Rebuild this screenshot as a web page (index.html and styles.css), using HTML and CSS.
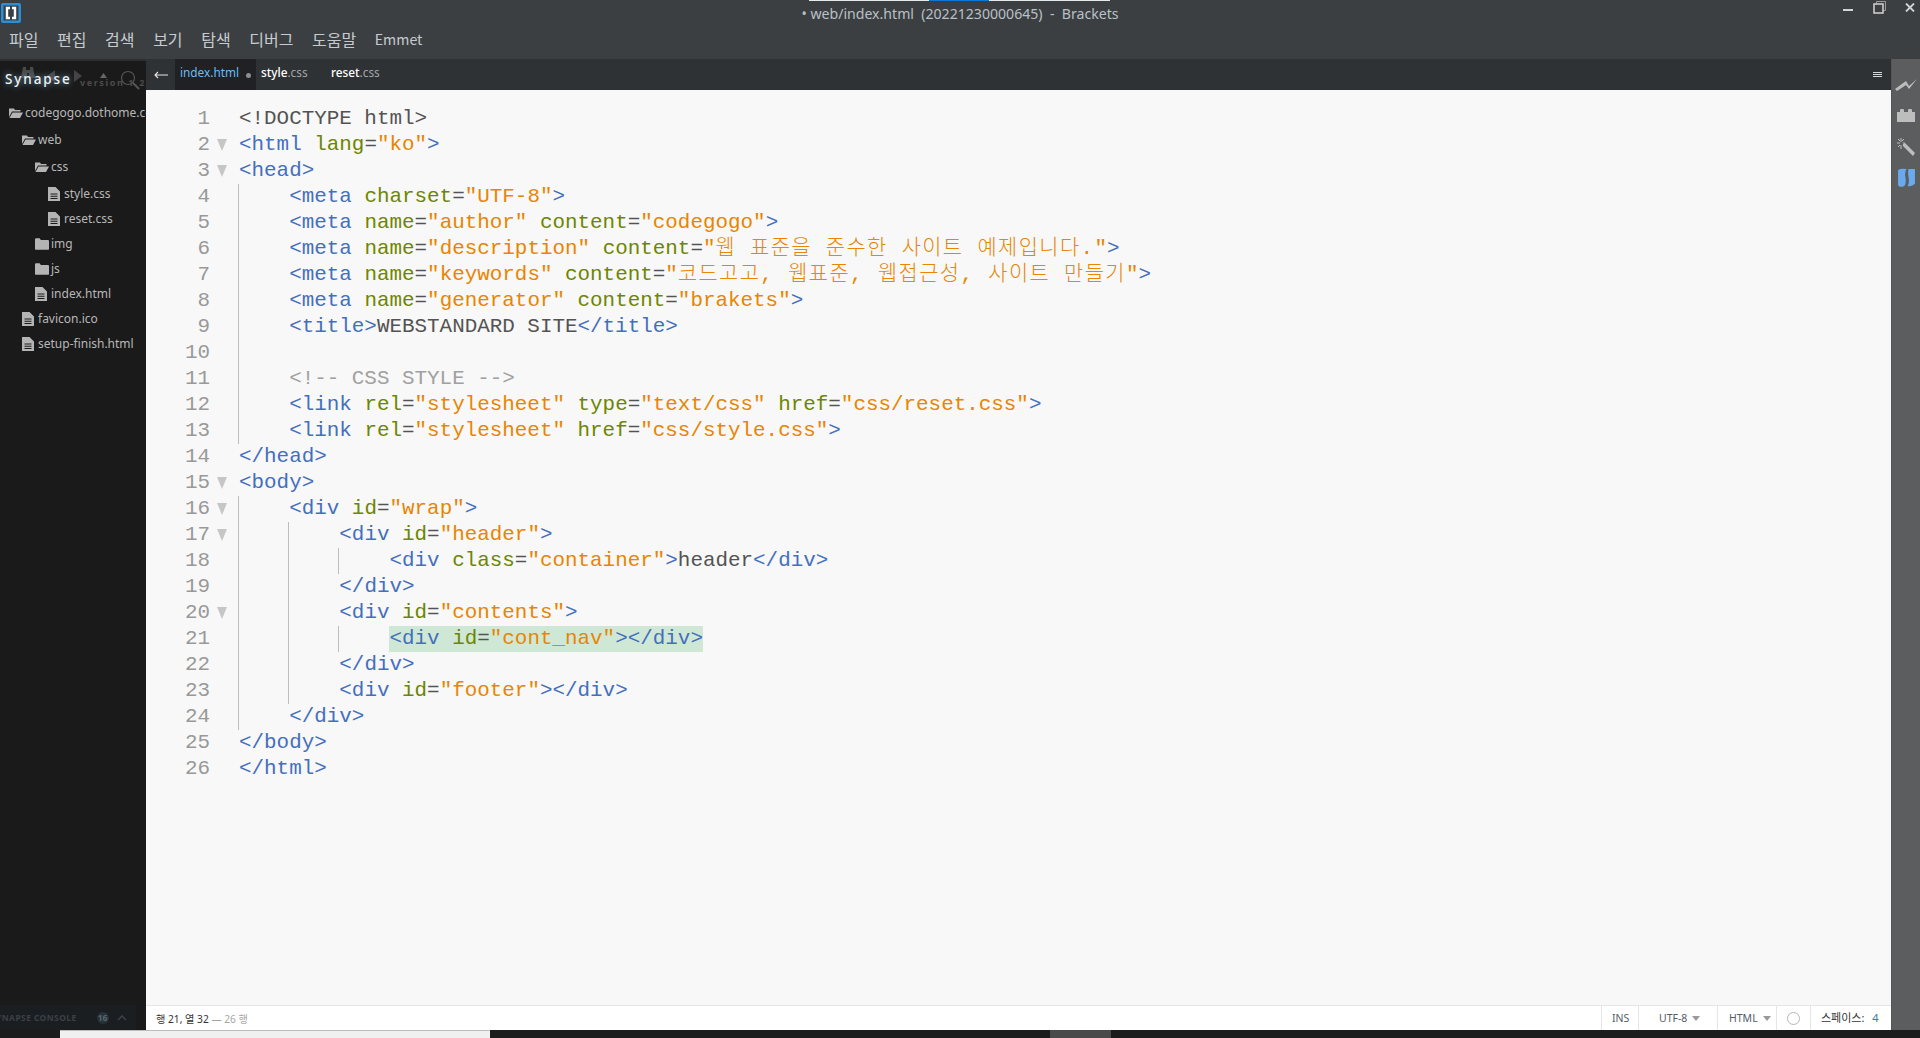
FILE: index.html
```html
<!DOCTYPE html>
<html lang="ko">
<head>
    <meta charset="UTF-8">
    <meta name="viewport" content="width=device-width, initial-scale=1.0">
    <title>web/index.html - Brackets</title>
    <link rel="stylesheet" href="styles.css">
</head>
<body>
    <svg class="defs" width="0" height="0">
        <symbol id="folder-open" viewBox="0 0 14 12">
            <path d="M0 1.5h5l1 1.5h5.500v1.500H3L0 10z"/>
            <path d="M3.500 5.500H14L11 11H0.500z"/>
        </symbol>
        <symbol id="folder" viewBox="0 0 12 10">
            <path d="M0 1q0-1 1-1h3l1 1.500h6q1 0 1 1V9q0 1-1 1H1q-1 0-1-1z"/>
        </symbol>
        <symbol id="file" viewBox="0 0 12 14">
            <path fill-rule="evenodd" d="M0 0h7.500L12 4.500V14H0zM2.500 6.500v1h7v-1zM2.500 8.800v1h7v-1zM2.500 11v1h7v-1z"/>
        </symbol>
    </svg>

    <div class="edge-strip"><div class="edge-blue"></div></div>

    <div class="app">
        <header class="header">
            <div class="titlebar">
                <div class="logo"><svg width="20" height="20" viewBox="0 0 20 20">
                    <rect x="0" y="0" width="20" height="20" rx="2" fill="#2a8fd8"/>
                    <rect x="2.500" y="2.500" width="15" height="15" fill="#3a4046"/>
                    <path d="M9 5H6v10h3M11 5h3v10h-3" fill="none" stroke="#fff" stroke-width="2.400"/>
                </svg></div>
                <div class="win-title">• web/index.html&nbsp; (20221230000645)&nbsp; -&nbsp; Brackets</div>
                <div class="win-controls">
                    <svg class="win-btn" width="10" height="10" viewBox="0 0 10 10"><rect x="0" y="4" width="10" height="2" fill="#d4d4d4"/></svg>
                    <svg class="win-btn" width="13" height="13" viewBox="0 0 13 13"><path d="M3.500 2.500V.5h9v9h-2.500" fill="none" stroke="#9a9a9a"/><rect x="1" y="3" width="9" height="9" fill="none" stroke="#d4d4d4" stroke-width="1.500"/></svg>
                    <svg class="win-btn" width="10" height="9" viewBox="0 0 10 9"><path d="M1 .5l8 8M9 .5l-8 8" stroke="#d4d4d4" stroke-width="1.800"/></svg>
                </div>
            </div>
            <nav class="menubar">
                <span>파일</span><span>편집</span><span>검색</span><span>보기</span><span>탐색</span><span>디버그</span><span>도움말</span><span class="menu-latin">Emmet</span>
            </nav>
        </header>

        <div class="main">
            <aside class="sidebar">
                <div class="syn-head">
                    <div class="syn-tools">
                        <svg class="tool-binoc" width="14" height="12" viewBox="0 0 14 12"><path d="M2 0h3v3h4V0h3l2 11H8V6H6v5H0z" fill="#4a4a4a"/></svg>
                        <svg class="tool-left" width="8" height="12" viewBox="0 0 8 12"><path d="M8 0v12L0 6z" fill="#444"/></svg>
                        <svg class="tool-right" width="8" height="12" viewBox="0 0 8 12"><path d="M0 0v12l8-6z" fill="#444"/></svg>
                        <svg class="tool-up" width="7" height="5" viewBox="0 0 7 5"><path d="M0 5h7L3.500 0z" fill="#666"/></svg>
                        <svg class="tool-find" width="20" height="20" viewBox="0 0 20 20"><circle cx="8" cy="8" r="6.500" fill="none" stroke="#555" stroke-width="1.200"/><path d="M13 13l6 6" stroke="#555" stroke-width="2"/></svg>
                    </div>
                    <span class="syn-name">Synapse</span>
                    <span class="syn-ver">version 1.2.</span>
                </div>
                <ul class="tree">
                    <li class="d0 open"><svg><use href="#folder-open"/></svg>codegogo.dothome.co.kr</li>
                    <li class="d1 open"><svg><use href="#folder-open"/></svg>web</li>
                    <li class="d2 open"><svg><use href="#folder-open"/></svg>css</li>
                    <li class="d3 leaf"><svg><use href="#file"/></svg>style.css</li>
                    <li class="d3 leaf"><svg><use href="#file"/></svg>reset.css</li>
                    <li class="d2"><svg><use href="#folder"/></svg>img</li>
                    <li class="d2"><svg><use href="#folder"/></svg>js</li>
                    <li class="d2 leaf"><svg><use href="#file"/></svg>index.html</li>
                    <li class="d1 leaf"><svg><use href="#file"/></svg>favicon.ico</li>
                    <li class="d1 leaf"><svg><use href="#file"/></svg>setup-finish.html</li>
                </ul>
                <div class="syn-console">
                    <span class="console-label">SYNAPSE CONSOLE</span>
                    <span class="console-badge">16</span>
                    <svg class="console-up" width="10" height="6" viewBox="0 0 10 6"><path d="M1 5l4-4 4 4" fill="none" stroke="#3c4348" stroke-width="1.500"/></svg>
                </div>
            </aside>

            <section class="workspace">
                <div class="tabbar">
                    <svg class="back" width="14" height="8" viewBox="0 0 14 8"><path d="M14 4H1M4 1L1 4l3 3" fill="none" stroke="#e6e6e6" stroke-width="1.100"/></svg>
                    <div class="tab active"><span>index.html</span><i class="dirty"></i></div>
                    <div class="tab"><b>style</b><em>.css</em></div>
                    <div class="tab"><b>reset</b><em>.css</em></div>
                    <div class="tab-menu"><i></i><i></i><i></i></div>
                </div>

                <div class="editor">
<div class="ln"><span class="gut">1</span><code class="d">&lt;!DOCTYPE html&gt;</code></div>
<div class="ln"><span class="gut fold">2</span><code><span class="t">&lt;html</span> <span class="a">lang</span>=<span class="s">"ko"</span><span class="t">&gt;</span></code></div>
<div class="ln"><span class="gut fold">3</span><code><span class="t">&lt;head&gt;</span></code></div>
<div class="ln"><span class="gut">4</span><code><span class="ind g"></span><span class="t">&lt;meta</span> <span class="a">charset</span>=<span class="s">"UTF-8"</span><span class="t">&gt;</span></code></div>
<div class="ln"><span class="gut">5</span><code><span class="ind g"></span><span class="t">&lt;meta</span> <span class="a">name</span>=<span class="s">"author"</span> <span class="a">content</span>=<span class="s">"codegogo"</span><span class="t">&gt;</span></code></div>
<div class="ln"><span class="gut">6</span><code><span class="ind g"></span><span class="t">&lt;meta</span> <span class="a">name</span>=<span class="s">"description"</span> <span class="a">content</span>=<span class="s">"<span class="k">웹 표준을 준수한 사이트 예제입니다.</span>"</span><span class="t">&gt;</span></code></div>
<div class="ln"><span class="gut">7</span><code><span class="ind g"></span><span class="t">&lt;meta</span> <span class="a">name</span>=<span class="s">"keywords"</span> <span class="a">content</span>=<span class="s">"<span class="k">코드고고, 웹표준, 웹접근성, 사이트 만들기</span>"</span><span class="t">&gt;</span></code></div>
<div class="ln"><span class="gut">8</span><code><span class="ind g"></span><span class="t">&lt;meta</span> <span class="a">name</span>=<span class="s">"generator"</span> <span class="a">content</span>=<span class="s">"brakets"</span><span class="t">&gt;</span></code></div>
<div class="ln"><span class="gut">9</span><code><span class="ind g"></span><span class="t">&lt;title&gt;</span>WEBSTANDARD SITE<span class="t">&lt;/title&gt;</span></code></div>
<div class="ln"><span class="gut">10</span><code><span class="ind g"></span></code></div>
<div class="ln"><span class="gut">11</span><code><span class="ind g"></span><span class="c">&lt;!-- CSS STYLE --&gt;</span></code></div>
<div class="ln"><span class="gut">12</span><code><span class="ind g"></span><span class="t">&lt;link</span> <span class="a">rel</span>=<span class="s">"stylesheet"</span> <span class="a">type</span>=<span class="s">"text/css"</span> <span class="a">href</span>=<span class="s">"css/reset.css"</span><span class="t">&gt;</span></code></div>
<div class="ln"><span class="gut">13</span><code><span class="ind g"></span><span class="t">&lt;link</span> <span class="a">rel</span>=<span class="s">"stylesheet"</span> <span class="a">href</span>=<span class="s">"css/style.css"</span><span class="t">&gt;</span></code></div>
<div class="ln"><span class="gut">14</span><code><span class="t">&lt;/head&gt;</span></code></div>
<div class="ln"><span class="gut fold">15</span><code><span class="t">&lt;body&gt;</span></code></div>
<div class="ln"><span class="gut fold">16</span><code><span class="ind g"></span><span class="t">&lt;div</span> <span class="a">id</span>=<span class="s">"wrap"</span><span class="t">&gt;</span></code></div>
<div class="ln"><span class="gut fold">17</span><code><span class="ind g"></span><span class="ind g"></span><span class="t">&lt;div</span> <span class="a">id</span>=<span class="s">"header"</span><span class="t">&gt;</span></code></div>
<div class="ln"><span class="gut">18</span><code><span class="ind g"></span><span class="ind g"></span><span class="ind g"></span><span class="t">&lt;div</span> <span class="a">class</span>=<span class="s">"container"</span><span class="t">&gt;</span>header<span class="t">&lt;/div&gt;</span></code></div>
<div class="ln"><span class="gut">19</span><code><span class="ind g"></span><span class="ind g"></span><span class="t">&lt;/div&gt;</span></code></div>
<div class="ln"><span class="gut fold">20</span><code><span class="ind g"></span><span class="ind g"></span><span class="t">&lt;div</span> <span class="a">id</span>=<span class="s">"contents"</span><span class="t">&gt;</span></code></div>
<div class="ln"><span class="gut">21</span><code><span class="ind g"></span><span class="ind g"></span><span class="ind g"></span><span class="hl"><span class="t">&lt;div</span> <span class="a">id</span>=<span class="s">"cont_nav"</span><span class="t">&gt;&lt;/div&gt;</span></span></code></div>
<div class="ln"><span class="gut">22</span><code><span class="ind g"></span><span class="ind g"></span><span class="t">&lt;/div&gt;</span></code></div>
<div class="ln"><span class="gut">23</span><code><span class="ind g"></span><span class="ind g"></span><span class="t">&lt;div</span> <span class="a">id</span>=<span class="s">"footer"</span><span class="t">&gt;&lt;/div&gt;</span></code></div>
<div class="ln"><span class="gut">24</span><code><span class="ind g"></span><span class="t">&lt;/div&gt;</span></code></div>
<div class="ln"><span class="gut">25</span><code><span class="t">&lt;/body&gt;</span></code></div>
<div class="ln"><span class="gut">26</span><code><span class="t">&lt;/html&gt;</span></code></div>
                </div>

                <footer class="statusbar">
                    <div class="cursor-pos">행 21, 열 32 <span>— 26 행</span></div>
                    <div class="st-cell st-ins">INS</div>
                    <div class="st-cell st-enc">UTF-8<i class="caret"></i></div>
                    <div class="st-cell st-lang">HTML<i class="caret"></i></div>
                    <div class="st-cell st-lint"><i class="lint"></i></div>
                    <div class="st-cell st-space">스페이스: <span>4</span></div>
                </footer>
            </section>

            <aside class="toolbar">
                <div class="tool-slot"><svg width="22" height="12" viewBox="0 0 22 12"><path d="M0 10L11 2l3 5 8-7-8 10-3-4-9 6z" fill="#bdbdbd"/></svg></div>
                <div class="tool-slot"><svg width="18" height="13" viewBox="0 0 18 13"><path d="M0 3h3V1q0-1 1-1h2q1 0 1 1v2h4V1q0-1 1-1h2q1 0 1 1v2h3v10H0z" fill="#bdbdbd"/></svg></div>
                <div class="tool-slot"><svg width="18" height="18" viewBox="0 0 18 18"><path d="M6 6l2-1 10 10-2 3L6 8z" fill="#bdbdbd"/><path d="M4 0v4M4 7v4M0 5h3M6 5h2M1 1l2 2M7 1L5 3M1 9l2-2" stroke="#bdbdbd"/></svg></div>
                <div class="tool-slot"><svg width="19" height="19" viewBox="0 0 18 18"><path d="M1 2Q4 0 9 1 7 4 8 9q1 5-1 8-5 2-6-1zM11 1h6v14q-3 3-7 2 2-3 1-8-1-5 0-8z" fill="#6aa9ee"/></svg></div>
            </aside>
        </div>

        <div class="taskbar">
            <div class="task-window"></div>
            <div class="task-item"></div>
        </div>
    </div>
</body>
</html>
```

FILE: styles.css
```css
html, body {
    margin: 0;
    padding: 0;
    height: 100%;
    overflow: hidden;
    font-family: "Noto Sans", "Noto Sans CJK KR", sans-serif;
}
.defs { position: absolute; }
.app {
    height: 100vh;
    display: flex;
    flex-direction: column;
}

/* thin sliver of another window along the top edge */
.edge-strip {
    position: absolute;
    top: 0;
    left: 809px;
    width: 301px;
    height: 1px;
    background-color: #e8e8e8;
}
.edge-blue {
    position: absolute;
    left: 120px;
    width: 60px;
    height: 1px;
    background-color: #0a78d7;
}

/* header */
.header {
    height: 59px;
    flex: none;
    background-color: #3c3f41;
}
.titlebar {
    height: 29px;
    display: grid;
    grid-template-columns: 1fr auto 1fr;
}
.logo {
    padding: 3px 0 0 1px;
}
.win-title {
    font-size: 14.100px;
    line-height: 28px;
    color: #b9c0c7;
}
.win-controls {
    position: relative;
}
.win-btn { position: absolute; }
.win-btn:nth-child(1) { right: 67px; top: 5px; }
.win-btn:nth-child(2) { right: 34px; top: 1px; }
.win-btn:nth-child(3) { right: 5px; top: 3px; }
.menubar {
    display: flex;
    gap: 18.600px;
    padding-left: 9px;
    font-family: "Noto Sans CJK KR", sans-serif;
    font-size: 16px;
    line-height: 20px;
    color: #c6cbd0;
}
.menu-latin {
    font-size: 14.200px;
}

.main {
    flex: 1;
    display: flex;
    min-height: 0;
}

/* sidebar */
.sidebar {
    width: 146px;
    flex: none;
    display: flex;
    flex-direction: column;
    background-color: #1a1a1a;
    border-top: 2px solid #2c2f32;
    overflow: hidden;
}
.syn-head {
    position: relative;
    height: 38px;
    flex: none;
}
.syn-tools svg { position: absolute; }
.tool-binoc { left: 21px; top: 6px; }
.tool-left { left: 47px; top: 9px; }
.tool-right { left: 74px; top: 9px; }
.tool-up { left: 100px; top: 12px; }
.tool-find { left: 120px; top: 9px; }
.syn-name {
    position: absolute;
    left: 5px;
    top: 9px;
    font-size: 13.500px;
    font-weight: 500;
    letter-spacing: 1.900px;
    color: #f2f2f2;
    text-shadow: 0 0 6px #6fa9c9;
}
.syn-ver {
    position: absolute;
    left: 80px;
    top: 15px;
    font-size: 9px;
    font-weight: 700;
    letter-spacing: 1.600px;
    white-space: nowrap;
    color: #4c4c4c;
}
.tree {
    list-style: none;
    margin: 0;
    padding: 0;
    flex: 1;
    font-size: 12px;
    color: #b8b8b8;
    white-space: nowrap;
}
.tree li {
    display: flex;
    align-items: center;
    height: 25px;
}
.tree li.open { height: 27px; }
.tree li.d2.open { margin-bottom: 1px; }
.tree svg {
    fill: #b4b4b4;
    flex: none;
    width: 14px;
    height: 12px;
    margin-right: 2px;
}
.tree .leaf svg {
    width: 12px;
    height: 14px;
    margin-right: 4px;
}
.d0 { padding-left: 9px; }
.d1 { padding-left: 22px; }
.d2 { padding-left: 35px; }
.d3 { padding-left: 48px; }
.syn-console {
    height: 25px;
    flex: none;
    width: 136px;
    display: flex;
    align-items: center;
    background-color: #1b1e21;
    font-size: 8.500px;
    font-weight: 700;
    color: #3a4146;
    overflow: hidden;
}
.console-label {
    margin-left: -9px;
    white-space: nowrap;
    letter-spacing: .4px;
}
.console-badge {
    flex: none;
    width: 12px;
    height: 12px;
    line-height: 12px;
    margin-left: 20px;
    text-align: center;
    border-radius: 50%;
    background-color: #26323a;
    color: #59666e;
}
.console-up {
    flex: none;
    margin-left: 8px;
}

/* tabs */
.workspace {
    flex: 1;
    min-width: 0;
    display: flex;
    flex-direction: column;
}
.tabbar {
    height: 31px;
    flex: none;
    display: flex;
    align-items: center;
    background-color: #2f3235;
    font-size: 11.800px;
}
.back {
    margin-left: 8px;
    width: 14px;
    margin-right: 7px;
}
.tab {
    width: 70px;
    height: 31px;
    line-height: 26px;
    padding-left: 5px;
    box-sizing: border-box;
    color: #eee;
}
.tab b { font-weight: 500; color: #fff; }
.tab em { font-style: normal; color: #a0a4a8; }
.tab.active {
    width: 81px;
    background-color: #1f2124;
    color: #6cbcf5;
    position: relative;
}
.dirty {
    position: absolute;
    left: 71px;
    top: 14px;
    width: 5px;
    height: 5px;
    border-radius: 50%;
    background-color: #8b8f93;
}
.tab-menu {
    margin-left: auto;
    margin-right: 9px;
    display: flex;
    flex-direction: column;
    gap: 1px;
}
.tab-menu i {
    display: block;
    width: 9px;
    height: 1px;
    background-color: #d8d8d8;
}

/* code */
.editor {
    flex: 1;
    min-height: 0;
    padding-top: 16px;
    background-color: #f8f8f8;
    font-family: "Liberation Mono", "Noto Sans CJK KR", monospace;
    font-size: 20.900px;
    color: #535353;
}
.ln {
    display: flex;
    height: 26px;
    line-height: 26px;
}
.gut {
    width: 64px;
    margin-right: 29px;
    flex: none;
    text-align: right;
    color: #999;
    position: relative;
}
.fold::after {
    content: "";
    position: absolute;
    left: 71px;
    top: 7px;
    border-left: 5.500px solid transparent;
    border-right: 5.500px solid transparent;
    border-top: 12px solid #c6c6c6;
}
code {
    font: inherit;
    white-space: pre;
}
.d { color: #535353; }
.t { color: #446fbd; }
.a { color: #6d8600; }
.s { color: #e88501; }
.c { color: #a0a0a0; }
.k {
    font-weight: 300;
    letter-spacing: 1.400px;
}
.hl {
    display: inline-block;
    height: 26px;
    background-color: #cfe8d6;
}
.ind {
    display: inline-block;
    width: 50.160px;
    height: 26px;
    vertical-align: top;
    position: relative;
}
.ind.g::before {
    content: "";
    position: absolute;
    left: -1px;
    top: 0;
    bottom: 0;
    width: 1px;
    background-color: #bdbdbd;
}

/* status bar */
.statusbar {
    height: 24px;
    flex: none;
    display: flex;
    align-items: center;
    background-color: #fff;
    border-top: 1px solid #e6e6e6;
    font-size: 10.500px;
    color: #555c66;
}
.cursor-pos {
    flex: 1;
    padding-left: 10px;
    font-size: 10.200px;
    color: #333;
}
.cursor-pos span { color: #a6a6a6; }
.st-cell {
    height: 24px;
    line-height: 24px;
    box-sizing: border-box;
    border-left: 1px solid #e6e6e6;
    display: flex;
    align-items: center;
}
.st-ins { width: 37px; padding-left: 10px; }
.st-enc { width: 79px; padding-left: 20px; }
.st-lang { width: 59px; padding-left: 11px; }
.st-lint { width: 34px; padding-left: 10px; }
.st-space { width: 81px; padding-left: 10px; font-size: 11px; color: #333; white-space: pre; }
.st-space span { margin-left: 5px; color: #446fbd; }
.caret {
    margin-left: 5px;
    border-left: 4px solid transparent;
    border-right: 4px solid transparent;
    border-top: 5px solid #9a9a9a;
}
.lint {
    width: 11px;
    height: 11px;
    border: 1px solid #b5b5b5;
    border-radius: 50%;
}

/* right toolbar */
.toolbar {
    width: 29px;
    flex: none;
    display: flex;
    flex-direction: column;
    align-items: center;
    padding-top: 10px;
    box-sizing: border-box;
    background-color: #5c5d5f;
    border-left: 1px solid #555;
}
.tool-slot {
    height: 31px;
    display: flex;
    align-items: center;
}

/* bit of the OS taskbar under the window */
.taskbar {
    height: 8px;
    flex: none;
    display: flex;
    background-color: #1c1c1c;
}
.task-window {
    width: 430px;
    margin-left: 60px;
    background-color: #f0f0f0;
    border-top: 1px solid #bdbdbd;
}
.task-item {
    width: 61px;
    margin-left: 560px;
    background-color: #4a4a4a;
}
```
